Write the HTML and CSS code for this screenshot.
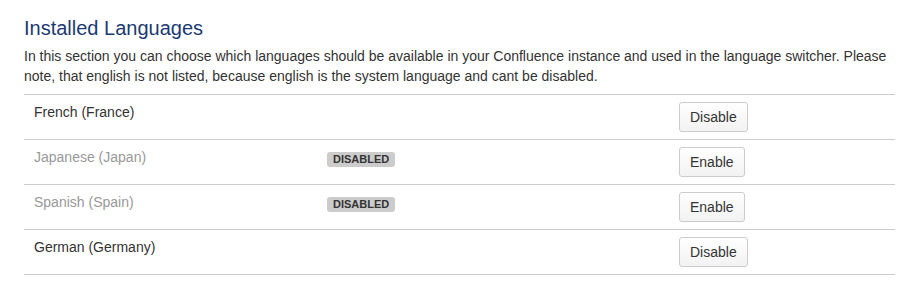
FILE: index.html
```html
<!DOCTYPE html>
<html lang="en">
<head>
  <meta charset="UTF-8">
  <title>Installed Languages</title>
  <link rel="stylesheet" href="styles.css">
</head>
<body>
<div class="page">
  <h2 class="title">Installed Languages</h2>
  <p class="desc">In this section you can choose which languages should be available in your Confluence instance and used in the language switcher. Please note, that english is not listed, because english is the system language and cant be disabled.</p>

  <div class="langTable">
    <div class="row">
      <div class="cell name">French (France)</div>
      <div class="cell status"></div>
      <div class="cell action"><button class="btn">Disable</button></div>
    </div>
    <div class="row off">
      <div class="cell name">Japanese (Japan)</div>
      <div class="cell status"><span class="lozenge">Disabled</span></div>
      <div class="cell action"><button class="btn">Enable</button></div>
    </div>
    <div class="row off">
      <div class="cell name">Spanish (Spain)</div>
      <div class="cell status"><span class="lozenge">Disabled</span></div>
      <div class="cell action"><button class="btn">Enable</button></div>
    </div>
    <div class="row">
      <div class="cell name">German (Germany)</div>
      <div class="cell status"></div>
      <div class="cell action"><button class="btn">Disable</button></div>
    </div>
  </div>
</div>
</body>
</html>
```

FILE: styles.css
```css
* {
  box-sizing: border-box;
}
body {
  margin: 0;
  background: #fff;
  color: #333;
  font-family: Arial, 'Liberation Sans', sans-serif;
  font-size: 14px;
  line-height: 20px;
}
.page {
  padding: 14px 8px 0 24px;
  width: 915px;
}
.title {
  margin: 0;
  color: #1c3a72;
  font-size: 20px;
  font-weight: normal;
  line-height: 28px;
}
.desc {
  margin: 4px 0 8px;
  line-height: 20px;
}
.langTable {
  border-top: 1px solid #ccc;
  width: 871px;
}
.row {
  display: grid;
  grid-template-columns: 293px 352px 1fr;
  border-bottom: 1px solid #ccc;
  height: 45px;
}
.cell {
  padding: 7px 10px;
}
.off .name {
  color: #999;
}
.lozenge {
  display: inline-block;
  margin-top: 5px;
  padding: 0 6px;
  background: #ccc;
  border-radius: 3px;
  color: #333;
  font-size: 11px;
  font-weight: bold;
  line-height: 15px;
  text-transform: uppercase;
}
.btn {
  height: 30px;
  padding: 4px 10px;
  background: linear-gradient(to bottom, #fff 0, #f2f2f2 100%);
  border: 1px solid #ccc;
  border-radius: 3px;
  color: #333;
  font-family: Arial, 'Liberation Sans', sans-serif;
  font-size: 14px;
  line-height: 20px;
  cursor: pointer;
}
```
